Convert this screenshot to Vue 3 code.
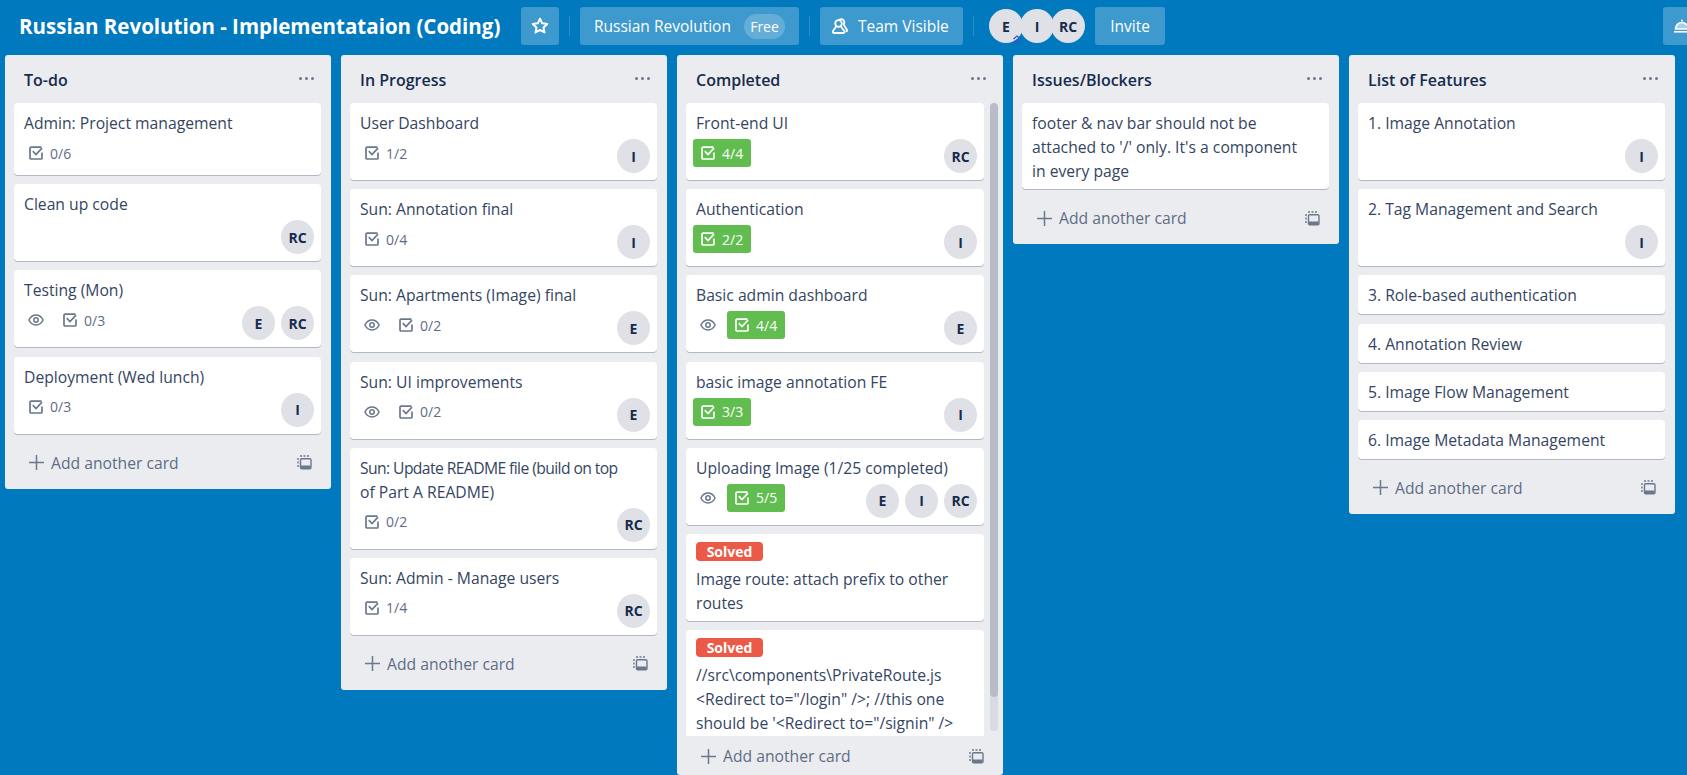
<script setup>
const lists = [
  { name: 'To-do', cards: [
    { t: ['Admin: Project management'], check: '0/6' },
    { t: ['Clean up code'], m: ['RC'] },
    { t: ['Testing (Mon)'], eye: true, check: '0/3', m: ['E', 'RC'] },
    { t: ['Deployment (Wed lunch)'], check: '0/3', m: ['I'] },
  ] },
  { name: 'In Progress', cards: [
    { t: ['User Dashboard'], check: '1/2', m: ['I'] },
    { t: ['Sun: Annotation final'], check: '0/4', m: ['I'] },
    { t: ['Sun: Apartments (Image) final'], eye: true, check: '0/2', m: ['E'] },
    { t: ['Sun: UI improvements'], eye: true, check: '0/2', m: ['E'] },
    { t: ['Sun: Update README file (build on top', 'of Part A README)'], check: '0/2', m: ['RC'], squeeze: true },
    { t: ['Sun: Admin - Manage users'], check: '1/4', m: ['RC'] },
  ] },
  { name: 'Completed', scroll: true, cards: [
    { t: ['Front-end UI'], check: '4/4', done: true, m: ['RC'] },
    { t: ['Authentication'], check: '2/2', done: true, m: ['I'] },
    { t: ['Basic admin dashboard'], eye: true, check: '4/4', done: true, m: ['E'] },
    { t: ['basic image annotation FE'], check: '3/3', done: true, m: ['I'] },
    { t: ['Uploading Image (1/25 completed)'], eye: true, check: '5/5', done: true, m: ['E', 'I', 'RC'] },
    { label: 'Solved', t: ['Image route: attach prefix to other', 'routes'] },
    { label: 'Solved', t: ['//src\\components\\PrivateRoute.js', '<Redirect to="/login" />; //this one', 'should be \'<Redirect to="/signin" />'] },
  ] },
  { name: 'Issues/Blockers', cards: [
    { t: ['footer & nav bar should not be', "attached to '/' only. It's a component", 'in every page'] },
  ] },
  { name: 'List of Features', cards: [
    { t: ['1. Image Annotation'], m: ['I'] },
    { t: ['2. Tag Management and Search'], m: ['I'] },
    { t: ['3. Role-based authentication'] },
    { t: ['4. Annotation Review'] },
    { t: ['5. Image Flow Management'] },
    { t: ['6. Image Metadata Management'] },
  ] },
]
</script>

<template>
  <div class="page">
    <header class="bar">
      <h1 class="title">Russian Revolution - Implementataion (Coding)</h1>
      <button class="btn star">
        <svg width="20" height="20" viewBox="0 0 20 20"><path d="M10 2.600l2.200 4.700 5.100.6-3.800 3.500 1 5-4.500-2.500-4.500 2.500 1-5-3.800-3.500 5.100-.6z" fill="none" stroke="#fff" stroke-width="2" stroke-linejoin="round"/></svg>
      </button>
      <i class="sep"></i>
      <button class="btn org">Russian Revolution <span class="pill">Free</span></button>
      <i class="sep"></i>
      <button class="btn team">
        <svg width="18" height="17" viewBox="0 0 18 17" fill="none" stroke="#fff" stroke-width="1.800"><circle cx="7.500" cy="5.500" r="3.300"/><path d="M5.300 8.200L2 13c-.6 1.100-.2 2 1 2h9.300c1.200 0 1.600-.9 1-2L9.700 8.200" stroke-linejoin="round"/><path d="M9 1.300c2-.7 4 .4 4.300 2.500.1 1-.2 1.900-.7 2.600l3.300 5.400c.4.800.2 1.300-.5 1.500" stroke-linecap="round" stroke-linejoin="round"/></svg>
        Team Visible
      </button>
      <i class="sep"></i>
      <div class="members">
        <span class="head">E
          <svg class="admin" width="10" height="11" viewBox="0 0 10 11" fill="none" stroke="#3f4fc4" stroke-width="1.300"><path d="M1.500 5L5 2l3.500 3M1.500 9.500L5 6.500l3.500 3"/></svg>
        </span>
        <span class="head">I</span>
        <span class="head">RC</span>
      </div>
      <button class="btn invite">Invite</button>
      <button class="btn menu">
        <svg width="16" height="16" viewBox="0 0 16 16" fill="none" stroke="#fff" stroke-width="1.600"><path d="M1.500 11a6.500 6.500 0 0 1 13 0z" fill="rgba(255,255,255,.55)"/><path d="M0 13.800h16"/><circle cx="8" cy="2.500" r="1" fill="#fff" stroke="none"/></svg>
      </button>
    </header>

    <main class="board">
      <section v-for="l in lists" :key="l.name" class="list" :class="{ tall: l.scroll }">
        <div class="list-head">
          <h2>{{ l.name }}</h2>
          <span class="dots"><i></i><i></i><i></i></span>
        </div>
        <div class="cards">
          <article v-for="(c, i) in l.cards" :key="i" class="card">
            <span v-if="c.label" class="label">{{ c.label }}</span>
            <div class="card-title" :class="{ multi: c.t.length > 1 && !c.check }"><div v-for="(line, n) in c.t" :key="line" :class="{ squeeze: c.squeeze && n === 0 }">{{ line }}</div></div>
            <div v-if="c.check || c.m" class="foot">
              <div class="badges">
                <span v-if="c.eye" class="badge eye">
                  <svg width="16" height="12" viewBox="0 0 16 12" fill="none" stroke="#6b778c" stroke-width="1.500"><path d="M.9 6C2.600 2.700 5 1 8 1s5.400 1.700 7.100 5C13.400 9.300 11 11 8 11S2.600 9.300.9 6z"/><circle cx="8" cy="6" r="2.200"/></svg>
                </span>
                <span v-if="c.check" class="badge" :class="{ done: c.done }">
                  <svg width="14" height="14" viewBox="0 0 14 14" fill="none" :stroke="c.done ? '#fff' : '#6b778c'" stroke-width="1.700"><path d="M13 6.500V12a1 1 0 0 1-1 1H2a1 1 0 0 1-1-1V2.200a1 1 0 0 1 1-1h10.500"/><path d="M3.800 5.200L7 8.500l6-6.300"/></svg>
                  {{ c.check }}
                </span>
              </div>
              <div v-if="c.m" class="avatars">
                <span v-for="a in c.m" :key="a" class="head">{{ a }}</span>
              </div>
            </div>
          </article>
          <div v-if="l.scroll" class="track"><div class="thumb"></div></div>
        </div>
        <div class="add">
          <svg width="15" height="15" viewBox="0 0 15 15" stroke="#6b778c" stroke-width="1.500"><path d="M7.500 0v15M0 7.500h15"/></svg>
          <span>Add another card</span>
          <svg class="tpl" width="15" height="15" viewBox="0 0 15 15" fill="none" stroke="#6b778c" stroke-width="1.400"><path d="M3 1h9" stroke-dasharray="2 1.500"/><path d="M1 3v9" stroke-dasharray="2 1.500"/><rect x="3.500" y="3.700" width="10.500" height="10" rx="1.200"/><rect x="4" y="10.500" width="9.500" height="3" fill="#6b778c" stroke="none"/></svg>
        </div>
      </section>
    </main>
  </div>
</template>

<style>
html, body { margin: 0; overflow: hidden; }
</style>

<style scoped>
.page {
  width: 1687px;
  height: 775px;
  overflow: hidden;
  background: #0079bf;
  font-family: "Open Sans", "Noto Sans", sans-serif;
  color: #172b4d;
}
.bar {
  height: 38px;
  padding: 7px 0 10px 19px;
  display: flex;
  align-items: center;
}
.title {
  margin: 0;
  flex: 0 0 502px;
  font-size: 20.500px;
  font-weight: 700;
  color: #fff;
  white-space: nowrap;
}
.btn {
  height: 38px;
  border: 0;
  border-radius: 3px;
  padding: 0 14px;
  background: rgba(255, 255, 255, 0.24);
  color: #fff;
  font: inherit;
  font-size: 15.500px;
  display: flex;
  align-items: center;
  white-space: nowrap;
  flex: none;
}
.star { width: 38px; padding: 0; justify-content: center; }
.sep { width: 1px; height: 20px; margin: 0 10px; background: rgba(255, 255, 255, 0.16); flex: none; }
.org { width: 219px; justify-content: space-between; padding: 0 14px; }
.pill { width: 41px; height: 25px; border-radius: 13px; background: rgba(255, 255, 255, 0.2); font-size: 14px; display: flex; align-items: center; justify-content: center; }
.team { width: 143px; gap: 9px; padding: 0 11px; }
.members { display: flex; margin: 0 13px 0 5px; }
.members .head { width: 34px; height: 34px; margin-right: -3px; }
.invite { width: 70px; justify-content: center; padding: 0; }
.menu { margin-left: 498px; padding: 0 0 0 11px; width: 40px; }
.head {
  position: relative;
  width: 33px;
  height: 34px;
  border-radius: 50%;
  background: #dfe1e6;
  color: #172b4d;
  font-size: 14px;
  font-weight: 700;
  display: flex;
  align-items: center;
  justify-content: center;
  flex: none;
}
.admin { position: absolute; right: 1px; bottom: -2px; }
.board {
  display: flex;
  align-items: flex-start;
  gap: 10px;
  padding-left: 5px;
}
.list {
  width: 326px;
  flex: none;
  background: #ebecf0;
  border-radius: 3px;
  display: flex;
  flex-direction: column;
  box-sizing: border-box;
  padding: 0 10px 0 9px;
}
.tall { height: 720px; }
.list-head { height: 48px; display: flex; justify-content: space-between; padding: 0 7px 0 10px; box-sizing: border-box; flex: none; }
.list-head h2 { margin: 0; padding-top: 13px; font-size: 16px; line-height: 24px; font-weight: 600; }
.dots { display: flex; gap: 3px; margin-top: 22px; height: 3px; }
.dots i { width: 3px; height: 3px; border-radius: 50%; background: #6b778c; }
.cards { position: relative; display: flex; flex-direction: column; gap: 9.200px; }
.tall .cards { flex: 1; min-height: 0; overflow: hidden; padding-right: 19px; margin-right: -10px; }
.card {
  background: #fff;
  border-radius: 4px;
  box-shadow: 0 1px 0 rgba(9, 30, 66, 0.25);
  padding-top: 8px;
  flex: none;
}
.label {
  display: block;
  width: 67px;
  height: 19px;
  margin: 0 0 6px 10px;
  border-radius: 4px;
  background: #eb5a46;
  color: #fff;
  font-size: 14px;
  font-weight: 700;
  line-height: 19px;
  text-align: center;
}
.card-title { padding: 0 10px 7px; font-size: 15.700px; line-height: 24px; white-space: nowrap; color: #344563; }
.multi { padding-bottom: 6px; }
.squeeze { letter-spacing: -0.6px; }
.foot { display: flex; justify-content: space-between; padding: 4px 7px 7px; margin-top: -7px; }
.badges { display: flex; align-items: flex-start; min-height: 29px; }
.badge {
  height: 28px;
  padding: 0 8px;
  display: flex;
  align-items: center;
  gap: 7px;
  font-size: 14px;
  color: #5e6c84;
  border-radius: 3px;
}
.eye { padding: 0 7px; margin-right: 4px; }
.done { background: #61bd4f; color: #fff; }
.avatars { display: flex; gap: 6px; }
.track { position: absolute; right: 5px; top: 0; bottom: 5px; width: 8px; border-radius: 4px; background: rgba(9, 30, 66, 0.08); }
.thumb { height: 594px; border-radius: 4px; background: rgba(9, 30, 66, 0.16); }
.add {
  height: 38px;
  margin: 10px 0 7px;
  padding: 0 9px 0 15px;
  display: flex;
  align-items: center;
  gap: 7px;
  font-size: 15.700px;
  color: #5e6c84;
  flex: none;
}
.tall .add { margin: 1px 0 0; }
.tpl { margin-left: auto; }
</style>
